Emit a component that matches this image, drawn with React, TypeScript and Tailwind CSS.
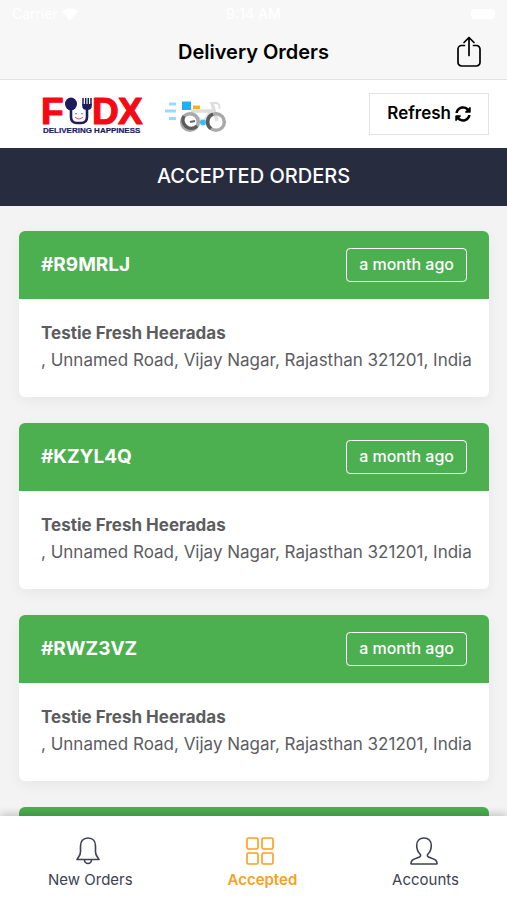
import { FaSyncAlt } from 'react-icons/fa';

type Order = {
  id: string;
  customer: string;
  address: string;
  age: string;
};

const customer = 'Testie Fresh Heeradas';
const address =
  ', Unnamed Road, Vijay Nagar, Rajasthan 321201, India';

const orders: Order[] = [
  { id: '#R9MRLJ', customer, address, age: 'a month ago' },
  { id: '#KZYL4Q', customer, address, age: 'a month ago' },
  { id: '#RWZ3VZ', customer, address, age: 'a month ago' },
];

const StatusBar = () => (
  <div className="flex h-7 items-center justify-between px-3 text-sm text-white">
    <span className="flex w-20 items-center gap-1">
      Carrier
      <svg viewBox="0 0 18 14" className="w-4" fill="currentColor">
        <path d="M9 14 0 4a13 13 0 0 1 18 0Z" />
      </svg>
    </span>
    <span className="font-medium">9:14 AM</span>
    <span className="flex w-20 justify-end">
      <span className="h-[10px] w-6 rounded bg-white" />
    </span>
  </div>
);

const ShareIcon = () => (
  <svg
    viewBox="0 0 26 32"
    className="h-8 w-[26px]"
    fill="none"
    stroke="currentColor"
    strokeWidth="1.7"
    strokeLinecap="round"
    strokeLinejoin="round"
  >
    <path d="M8.5 9.5H5.500A3.500 3.500 0 0 0 2 13V26.500A3.500 3.500 0 0 0 5.500 30H20.500A3.500 3.500 0 0 0 24 26.500V13A3.500 3.500 0 0 0 20.500 9.500H17.500" />
    <path d="M13 19.500V2M8 6.500l5-5 5 5" />
  </svg>
);

const FudxLogo = () => (
  <svg
    viewBox="-2 -6 108 52"
    className="h-[52px] w-[108px] overflow-visible"
    role="img"
    aria-label="FUDX Delivering Happiness"
  >
    <g
      fill="#f50a14"
      stroke="#f50a14"
      strokeWidth="1.2"
      strokeLinejoin="round"
      fontFamily="Liberation Sans, Arial, sans-serif"
      fontWeight="700"
      fontSize="37"
    >
      <text x="-1" y="30">F</text>
      <text x="50" y="30">D</text>
      <text x="76" y="30">X</text>
    </g>
    <path
      d="M29 12v11q0 6 6 6h4q6 0 6-6V12"
      fill="#fff"
      stroke="#1b1b5e"
      strokeWidth="2.600"
    />
    <ellipse cx="29" cy="10" rx="6" ry="6.500" fill="#1b1b5e" />
    <path
      d="M41 4v7M43.700 4v7M46.300 4v7M49 4v7"
      fill="none"
      stroke="#1b1b5e"
      strokeWidth="1.500"
    />
    <path
      d="M40.200 10h9.600v2q0 4-4.800 4t-4.800-4Z"
      fill="#1b1b5e"
    />
    <path
      d="M33 20q1-1 2 0m4 0q1-1 2 0M33 23q4 4 8 0"
      fill="none"
      stroke="#f0525c"
      strokeWidth="1"
    />
    <text
      x="1"
      y="39"
      fill="#1b1b5e"
      stroke="#1b1b5e"
      strokeWidth="0.2"
      fontFamily="Liberation Sans, Arial, sans-serif"
      fontWeight="700"
      fontSize="8"
    >
      DELIVERING HAPPINESS
    </text>
  </svg>
);

const BikeLogo = () => (
  <svg
    viewBox="0 0 64 38"
    className="h-[38px] w-16"
    fill="none"
    aria-hidden="true"
  >
    <path
      d="M5 9h7M1 16h11M5 23.500h7"
      stroke="#9bd8fb"
      strokeWidth="3"
    />
    <path
      d="M27 16h20l-7 11M27 16l11 11M48 8l5 18"
      stroke="#dedede"
      strokeWidth="3.500"
    />
    <path
      d="M46 8h6q4 0 3.500 6"
      stroke="#dedede"
      strokeWidth="2"
    />
    <circle
      cx="26"
      cy="27"
      r="8.300"
      stroke="#a9a9a9"
      strokeWidth="3.500"
    />
    <path
      d="M20 21a8.300 8.300 0 0 0 13 10"
      stroke="#5c5c5c"
      strokeWidth="3.500"
    />
    <circle
      cx="52"
      cy="27"
      r="8.300"
      stroke="#a9a9a9"
      strokeWidth="3.500"
    />
    <path
      d="M49 19.200a8.300 8.300 0 0 0-2 14.500"
      stroke="#5c5c5c"
      strokeWidth="3.500"
    />
    <path d="M26 27l5-1" stroke="#666" strokeWidth="2" />
    <path d="M18 6.500h9V15h-9Z" fill="#1fb0f7" />
    <path d="M29 10.500h7V14h-7Z" fill="#f7ac2c" />
    <circle cx="39" cy="27.500" r="3" fill="#3dbcfa" />
  </svg>
);

const BellIcon = () => (
  <svg
    viewBox="0 0 30 30"
    className="size-[30px]"
    fill="none"
    stroke="currentColor"
    strokeWidth="1.6"
    strokeLinejoin="round"
  >
    <path d="M15 2c-5 0-7.500 3.500-7.500 8v6c0 3-1.500 4-3.500 7.500h22c-2-3.500-3.500-4.500-3.500-7.500v-6c0-4.500-2.500-8-7.500-8Z" />
    <path d="M11.500 24a3.500 3.500 0 0 0 7 0" />
  </svg>
);

const GridIcon = () => (
  <svg
    viewBox="0 0 30 30"
    className="size-[30px]"
    fill="none"
    stroke="currentColor"
    strokeWidth="1.6"
  >
    <rect x="2" y="2" width="11" height="11" rx="1.5" />
    <rect x="17" y="2" width="11" height="11" rx="1.5" />
    <rect x="2" y="17" width="11" height="11" rx="1.5" />
    <rect x="17" y="17" width="11" height="11" rx="1.5" />
  </svg>
);

const PersonIcon = () => (
  <svg
    viewBox="0 0 30 30"
    className="size-[30px]"
    fill="none"
    stroke="currentColor"
    strokeWidth="1.6"
    strokeLinejoin="round"
  >
    <path d="M15 2c-4.500 0-7.300 3-7.300 7.500 0 4.500 1.500 7 3.800 9 .5 2-.5 2.500-3.500 3.500-4.500 1.500-6 2.500-6 5.500q0 .5.500.5h25q.5 0 .5-.5c0-3-1.500-4-6-5.500-3-1-4-1.500-3.500-3.500 2.300-2 3.800-4.500 3.800-9C22.300 5 19.500 2 15 2Z" />
  </svg>
);

const OrderCard = ({ order }: { order: Order }) => (
  <article className="shrink-0 overflow-hidden rounded-md bg-white shadow-[0_4px_14px_rgba(0,0,0,0.05)]">
    <div className="flex h-[68px] items-center justify-between bg-[#4caf50] px-[22px] text-white">
      <h2 className="text-[19px] font-bold">{order.id}</h2>
      <span className="rounded-sm border border-white px-3 pt-[3px] pb-[5px] text-base leading-6 font-medium">
        {order.age}
      </span>
    </div>
    <div className="px-[22px] pt-[21px] pb-[23px] text-[17px] leading-[27px] text-[#5c5c5f]">
      <p className="font-bold">{order.customer}</p>
      <p className="whitespace-nowrap">{order.address}</p>
    </div>
  </article>
);

const App = () => {
  return (
    <div className="flex h-screen flex-col overflow-hidden bg-[#f3f3f3] font-['Inter',sans-serif]">
      <header className="border-b border-[#e2e2e2] bg-[#f7f7f7]">
        <StatusBar />
        <div className="grid h-[51px] grid-cols-[1fr_auto_1fr] items-start px-[25px] text-black">
          <h1 className="col-start-2 pt-2 text-xl leading-8 font-semibold">
            Delivery Orders
          </h1>
          <button
            type="button"
            aria-label="Share"
            className="mt-2 justify-self-end"
          >
            <ShareIcon />
          </button>
        </div>
      </header>
      <div className="flex h-[68px] items-center bg-white pr-[18px] pl-10">
        <FudxLogo />
        <div className="ml-4">
          <BikeLogo />
        </div>
        <button
          type="button"
          className="ml-auto flex h-[42px] items-center gap-1 border border-[#e4e4e4] px-[17px] text-[17px] font-semibold text-black"
        >
          Refresh
          <FaSyncAlt className="size-4" />
        </button>
      </div>
      <div className="bg-[#282c3f] pt-3 pb-[14px] text-center text-xl leading-8 font-medium text-white">
        ACCEPTED ORDERS
      </div>
      <main className="flex min-h-0 flex-1 flex-col gap-[26px] overflow-hidden pt-[25px] pr-[18px] pl-[19px]">
        {orders.map((order) => (
          <OrderCard key={order.id} order={order} />
        ))}
        <div className="h-[68px] shrink-0 rounded-t-md bg-[#4caf50]" />
      </main>
      <nav className="relative flex h-[84px] justify-between bg-white px-12 text-[15px] leading-5 text-[#3d4152] shadow-[0_-2px_8px_rgba(0,0,0,0.2)]">
        <a href="#new" className="flex flex-col items-center gap-1 pt-5">
          <span className="pr-1">
            <BellIcon />
          </span>
          New Orders
        </a>
        <a
          href="#accepted"
          className="flex flex-col items-center gap-1 pt-5 font-semibold text-[#fc9f1b]"
        >
          <span className="pr-1">
            <GridIcon />
          </span>
          Accepted
        </a>
        <a
          href="#accounts"
          className="flex flex-col items-center gap-1 pt-5"
        >
          <span className="pr-1">
            <PersonIcon />
          </span>
          Accounts
        </a>
      </nav>
    </div>
  );
};

export default App;
